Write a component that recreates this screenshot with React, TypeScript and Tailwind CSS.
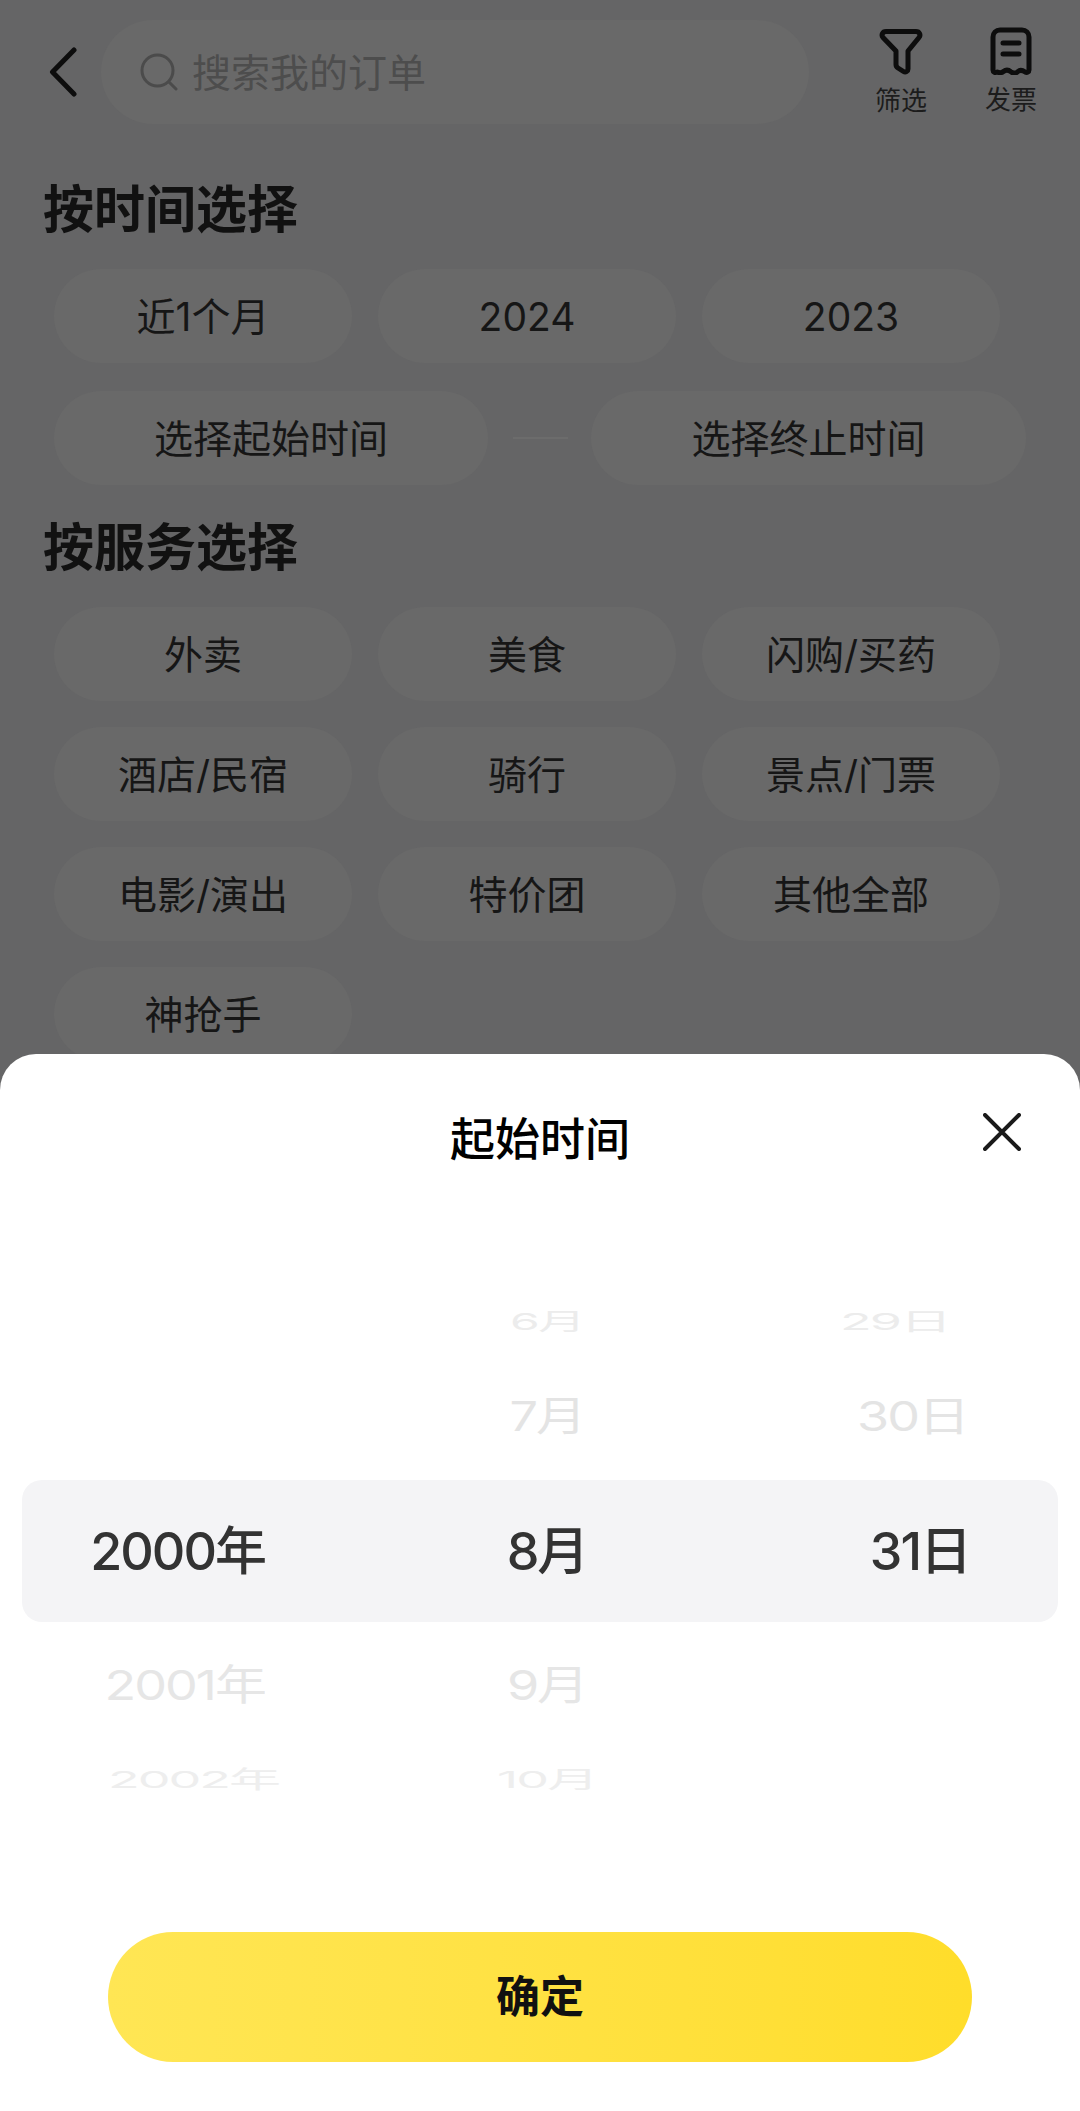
const font = "[font-family:'Inter','Noto_Sans_CJK_SC',sans-serif]";

function Chip({ label, className = "w-[298px]" }: { label: string; className?: string }) {
  return (
    <div className={`${className} h-[94px] rounded-[47px] bg-[#696969] flex items-center justify-center text-[39px] leading-none text-[#161616]`}>
      {label}
    </div>
  );
}

function Heading({ label, className }: { label: string; className: string }) {
  return <h2 className={`${className} ml-[43px] h-[60px] leading-[60px] text-[51px] font-semibold text-[#111111]`}>{label}</h2>;
}

const wheel = [
  {
    row: "h-[90px]",
    cells: [
      { text: "", cls: "" },
      { text: "6月", cls: "text-[#ececec] scale-x-[0.92] scale-y-[0.45]" },
      { text: "29日", cls: "text-[#ececec] origin-right -translate-x-[20px] scale-y-[0.45]" },
    ],
  },
  {
    row: "h-[100px] mb-[13px]",
    cells: [
      { text: "", cls: "" },
      { text: "7月", cls: "text-[#e4e4e4] scale-x-[0.97] scale-y-[0.78]" },
      { text: "30日", cls: "text-[#e4e4e4] origin-right -translate-x-[2px] scale-y-[0.78]" },
    ],
  },
  {
    row: "h-[142px] bg-[#f4f4f6] rounded-[20px]",
    cells: [
      { text: "2000年", cls: "text-[#333333] font-medium translate-y-[1px]" },
      { text: "8月", cls: "text-[#333333] font-medium translate-y-[1px]" },
      { text: "31日", cls: "text-[#333333] font-medium translate-y-[1px]" },
    ],
  },
  {
    row: "h-[128px]",
    cells: [
      { text: "2001年", cls: "text-[#e6e6e6] origin-right scale-y-[0.8]" },
      { text: "9月", cls: "text-[#e6e6e6] scale-y-[0.8]" },
      { text: "", cls: "" },
    ],
  },
  {
    row: "h-[60px]",
    cells: [
      { text: "2002年", cls: "text-[#eeeeee] origin-right translate-x-[14px] scale-y-[0.45]" },
      { text: "10月", cls: "text-[#eeeeee] scale-y-[0.45]" },
      { text: "", cls: "" },
    ],
  },
];

export default function App() {
  return (
    <div className={`${font} w-[1080px] h-[2111px] flex flex-col overflow-hidden bg-[#656566]`}>
      {/* dimmed page behind the sheet */}
      <div className="h-[1100px] shrink-0 overflow-hidden">
        <div className="flex items-start pt-[20px] pl-[49px]">
          <svg className="w-[28px] h-[50px] mt-[27px] shrink-0" viewBox="0 0 28 50" fill="none" stroke="#0d0d0d" strokeWidth="5" strokeLinecap="round" strokeLinejoin="round">
            <path d="M25 3 3.500 25 25 47" />
          </svg>
          <div className="ml-[24px] w-[708px] h-[104px] rounded-[52px] bg-[#696969] flex items-center pl-[39px] shrink-0">
            <svg className="w-[38px] h-[38px] shrink-0" viewBox="0 0 38 38" fill="none" stroke="#4b4b4b" strokeWidth="3" strokeLinecap="round">
              <circle cx="17.500" cy="17.500" r="15.500" />
              <path d="M29 29l7 7" />
            </svg>
            <span className="ml-[14px] text-[39px] leading-none text-[#4d4d4d]">搜索我的订单</span>
          </div>
          <div className="ml-[62px] w-[60px] flex flex-col items-center shrink-0 -mt-[20px]">
            <svg className="w-[44px] h-[47px] mt-[28px]" viewBox="0 0 44 47" fill="none" stroke="#0d0d0d" strokeWidth="5" strokeLinejoin="round" strokeLinecap="round">
              <path d="M7 3.500h30c3.500 0 5 3.500 3 6L29 23v18c0 2.500-2.500 3.800-4.500 2.500l-5.500-3.500c-1.300-.8-2-2-2-3.500V23L4 9.500c-2-2.500-.5-6 3-6Z" />
            </svg>
            <span className="mt-[11px] text-[26px] leading-[30px] text-[#1c1c1c] whitespace-nowrap">筛选</span>
          </div>
          <div className="ml-[50px] w-[60px] flex flex-col items-center shrink-0 -mt-[20px]">
            <svg className="w-[42px] h-[48px] mt-[27px]" viewBox="0 0 42 48" fill="none" stroke="#0d0d0d" strokeWidth="5" strokeLinejoin="round" strokeLinecap="round">
              <path d="M10 3h22c4 0 7 3 7 7v33c0 2-2 3-3.800 2-3-2-5-2.500-7.200-.5-2.500 2.300-4.800 2.300-7.300.2-2.500-2.200-4.800-2.200-7.300-.2-2.200 1.800-4.300 1.400-6.200.5C5 46 3 45 3 43V10c0-4 3-7 7-7Z" />
              <path d="M13 16h16M13 27h16" />
            </svg>
            <span className="mt-[10px] text-[26px] leading-[30px] text-[#1c1c1c] whitespace-nowrap">发票</span>
          </div>
        </div>

        <Heading label="按时间选择" className="mt-[56px]" />
        <div className="mt-[29px] ml-[54px] flex gap-x-[26px]">
          <Chip label="近1个月" />
          <Chip label="2024" />
          <Chip label="2023" />
        </div>
        <div className="mt-[28px] ml-[54px] flex items-center">
          <Chip label="选择起始时间" className="w-[434px]" />
          <div className="ml-[25px] w-[55px] h-[2px] bg-[#6c6c6c]" />
          <Chip label="选择终止时间" className="ml-[23px] w-[435px]" />
        </div>

        <Heading label="按服务选择" className="mt-[33px]" />
        <div className="mt-[29px] ml-[54px] grid grid-cols-[298px_298px_298px] gap-x-[26px] gap-y-[26px]">
          {["外卖", "美食", "闪购/买药", "酒店/民宿", "骑行", "景点/门票", "电影/演出", "特价团", "其他全部", "神抢手"].map((label) => (
            <Chip key={label} label={label} className="w-full" />
          ))}
        </div>
      </div>

      {/* bottom sheet */}
      <div className="relative -mt-[46px] flex-1 bg-white rounded-t-[36px] flex flex-col">
        <div className="mt-[55px] h-[60px] grid grid-cols-[1fr_auto_1fr] items-center">
          <div />
          <div className="text-[45px] leading-none font-medium text-black">起始时间</div>
          <div className="flex justify-end pr-[59px]">
            <svg className="w-[38px] h-[38px] -mt-[14px]" viewBox="0 0 38 38" fill="none" stroke="#1a1a1a" strokeWidth="4" strokeLinecap="round">
              <path d="M2 2l34 34M36 2 2 36" />
            </svg>
          </div>
        </div>

        <div className="mt-[108px] mx-[22px] flex flex-col">
          {wheel.map((item, i) => (
            <div key={i} className={`${item.row} grid grid-cols-[243px_564px_141px] items-center text-[52px] leading-none tracking-[-2px]`}>
              <div className={`text-right whitespace-nowrap ${item.cells[0].cls}`}>{item.cells[0].text}</div>
              <div className={`text-center whitespace-nowrap ${item.cells[1].cls}`}>{item.cells[1].text}</div>
              <div className={`text-right whitespace-nowrap ${item.cells[2].cls}`}>{item.cells[2].text}</div>
            </div>
          ))}
        </div>

        <button className="mt-[122px] mx-auto w-[864px] h-[130px] rounded-[65px] bg-gradient-to-r from-[#ffe654] to-[#ffdd2a] text-[44px] font-bold text-[#111111]">
          确定
        </button>
      </div>
    </div>
  );
}
